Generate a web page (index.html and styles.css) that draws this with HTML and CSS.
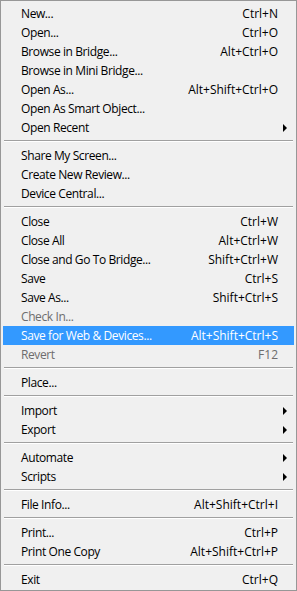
FILE: index.html
```html
<!DOCTYPE html>
<html lang="en">
<head>
    <meta charset="UTF-8">
    <title>File Menu</title>
    <link rel="stylesheet" href="styles.css">
</head>
<body>
    <ul class="menu">
        <li class="menu-item"><span class="label">New...</span><span class="key">Ctrl+N</span></li>
        <li class="menu-item"><span class="label">Open...</span><span class="key">Ctrl+O</span></li>
        <li class="menu-item"><span class="label">Browse in Bridge...</span><span class="key">Alt+Ctrl+O</span></li>
        <li class="menu-item"><span class="label">Browse in Mini Bridge...</span></li>
        <li class="menu-item"><span class="label">Open As...</span><span class="key">Alt+Shift+Ctrl+O</span></li>
        <li class="menu-item"><span class="label">Open As Smart Object...</span></li>
        <li class="menu-item"><span class="label">Open Recent</span><span class="arrow"></span></li>
        <li class="separator"></li>
        <li class="menu-item"><span class="label">Share My Screen...</span></li>
        <li class="menu-item"><span class="label">Create New Review...</span></li>
        <li class="menu-item"><span class="label">Device Central...</span></li>
        <li class="separator"></li>
        <li class="menu-item"><span class="label">Close</span><span class="key">Ctrl+W</span></li>
        <li class="menu-item"><span class="label">Close All</span><span class="key">Alt+Ctrl+W</span></li>
        <li class="menu-item"><span class="label">Close and Go To Bridge...</span><span class="key">Shift+Ctrl+W</span></li>
        <li class="menu-item"><span class="label">Save</span><span class="key">Ctrl+S</span></li>
        <li class="menu-item"><span class="label">Save As...</span><span class="key">Shift+Ctrl+S</span></li>
        <li class="menu-item disabled"><span class="label">Check In...</span></li>
        <li class="menu-item active"><span class="label">Save for Web &amp; Devices...</span><span class="key">Alt+Shift+Ctrl+S</span></li>
        <li class="menu-item disabled"><span class="label">Revert</span><span class="key">F12</span></li>
        <li class="separator"></li>
        <li class="menu-item"><span class="label">Place...</span></li>
        <li class="separator"></li>
        <li class="menu-item"><span class="label">Import</span><span class="arrow"></span></li>
        <li class="menu-item"><span class="label">Export</span><span class="arrow"></span></li>
        <li class="separator"></li>
        <li class="menu-item"><span class="label">Automate</span><span class="arrow"></span></li>
        <li class="menu-item"><span class="label">Scripts</span><span class="arrow"></span></li>
        <li class="separator"></li>
        <li class="menu-item"><span class="label">File Info...</span><span class="key">Alt+Shift+Ctrl+I</span></li>
        <li class="separator"></li>
        <li class="menu-item"><span class="label">Print...</span><span class="key">Ctrl+P</span></li>
        <li class="menu-item"><span class="label">Print One Copy</span><span class="key">Alt+Shift+Ctrl+P</span></li>
        <li class="separator"></li>
        <li class="menu-item"><span class="label">Exit</span><span class="key">Ctrl+Q</span></li>
    </ul>
</body>
</html>
```

FILE: styles.css
```css
body {
    margin: 0;
    background: #ffffff;
    font-family: 'Open Sans', 'Noto Sans', sans-serif;
    font-size: 12px;
}
.menu {
    width: 297px;
    height: 591px;
    box-sizing: border-box;
    margin: 0;
    padding: 3px 2px 1px 2px;
    list-style: none;
    background: #f0f0f0;
    border: 1px solid #979797;
}
.menu-item {
    display: grid;
    grid-template-columns: 1fr auto 16px;
    align-items: center;
    height: 19px;
    padding-left: 18px;
    color: #000;
    line-height: 19px;
    white-space: nowrap;
}
.menu-item .label {
    letter-spacing: -0.4px;
}
.menu-item .key {
    grid-column: 2;
}
.menu-item .arrow {
    grid-column: 3;
    justify-self: start;
    margin-left: 5px;
    width: 0;
    height: 0;
    border-left: 4px solid #000;
    border-top: 4px solid transparent;
    border-bottom: 4px solid transparent;
}
.menu-item.active {
    background: #3399ff;
    color: #fff;
}
.menu-item.disabled {
    color: #6d6d6d;
}
.separator {
    height: 9px;
    box-sizing: border-box;
    padding-top: 3px;
    margin: 0 1px;
}
.separator::before {
    content: '';
    display: block;
    border-top: 1px solid #a0a0a0;
    border-bottom: 1px solid #ffffff;
}
```
